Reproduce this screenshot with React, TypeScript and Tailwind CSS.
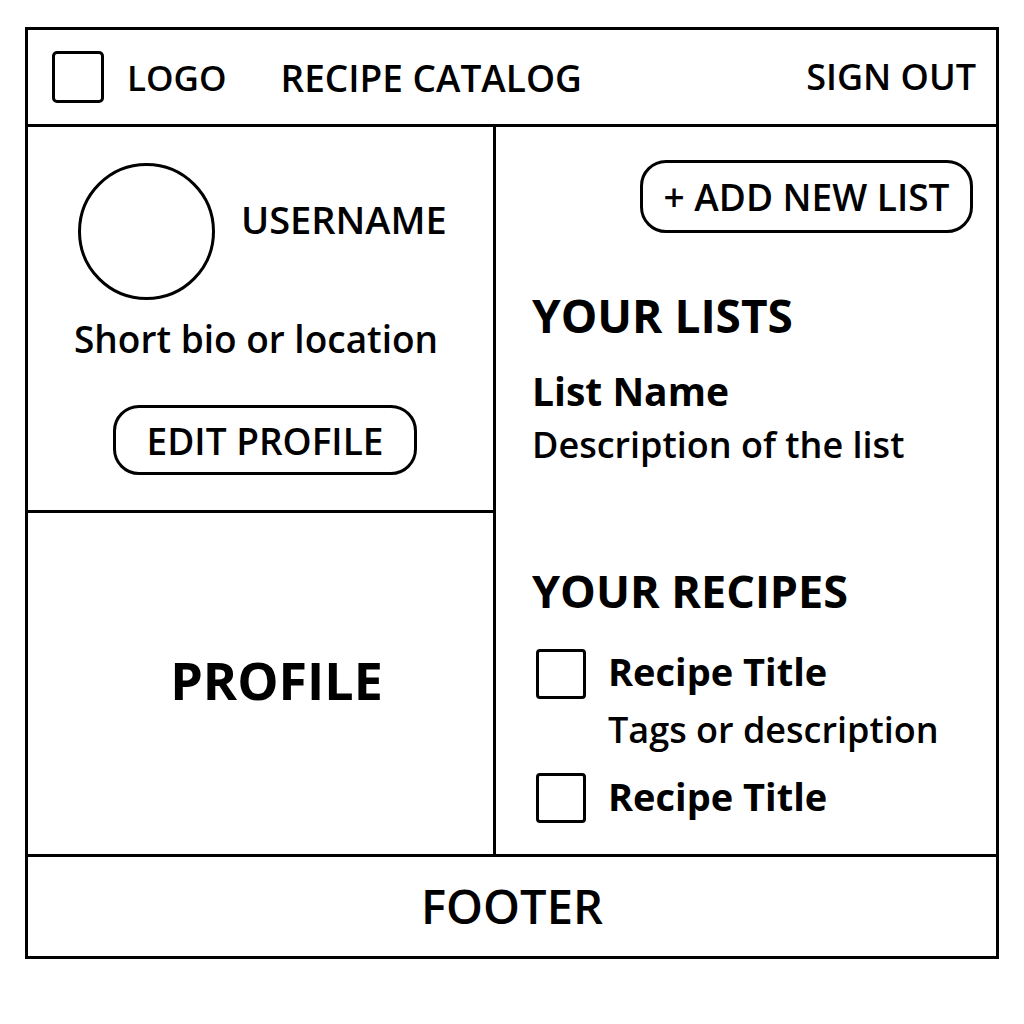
export default function App(): JSX.Element {
  return (
    <div className="min-h-[1024px] w-[1024px] bg-white pt-[27px] pl-[25px] text-black" style={{ fontFamily: '"Open Sans", "Noto Sans", sans-serif' }}>
      <div className="w-[974px] border-[3px] border-black">
        {/* Header */}
        <header className="flex h-[97px] items-center border-b-[3px] border-black pl-[24px] pr-[20px] font-semibold">
          <div className="size-[52px] rounded-[5px] border-[3px] border-black" />
          <span className="ml-[23px] text-[35px] leading-none">LOGO</span>
          <span className="ml-[54px] text-[37px] leading-none">RECIPE CATALOG</span>
          <span className="ml-auto text-[36px] leading-none">SIGN OUT</span>
        </header>

        <div className="flex h-[727px]">
          {/* Left column */}
          <div className="flex w-[468px] flex-col border-r-[3px] border-black">
            <section className="h-[386px] border-b-[3px] border-black pt-[36px]">
              <div className="flex items-start pl-[50px]">
                <div className="size-[137px] rounded-full border-[3px] border-black" />
                <span className="mt-[37px] ml-[26px] text-[38px] leading-none font-semibold">USERNAME</span>
              </div>
              <p className="mt-[20px] pl-[46px] text-[37px] leading-none font-semibold">Short bio or location</p>
              <button className="mt-[48px] ml-[85px] flex h-[70px] w-[304px] items-center justify-center rounded-[26px] border-[3px] border-black text-[37px] leading-none font-semibold">
                EDIT PROFILE
              </button>
            </section>
            <section className="flex flex-1 items-center justify-center pb-[8px] pl-[32px]">
              <h1 className="text-[52px] leading-none font-bold">PROFILE</h1>
            </section>
          </div>

          {/* Right column */}
          <div className="flex-1 pt-[33px] pl-[36px]">
            <div className="flex justify-end pr-[23px]">
              <button className="flex h-[73px] w-[333px] items-center justify-center rounded-[26px] border-[3px] border-black text-[37px] leading-none font-semibold">
                + ADD NEW LIST
              </button>
            </div>

            <h2 className="mt-[59px] text-[46px] leading-none font-bold">YOUR LISTS</h2>
            <p className="mt-[33px] text-[39px] leading-none font-bold">List Name</p>
            <p className="mt-[17px] text-[36px] leading-none font-semibold">Description of the list</p>

            <h2 className="mt-[105px] text-[45px] leading-none font-bold">YOUR RECIPES</h2>
            <div className="mt-[36px] flex items-start">
              <div className="ml-[4px] size-[50px] shrink-0 rounded-[4px] border-[3px] border-black" />
              <div className="ml-[22px]">
                <p className="mt-[3px] text-[38px] leading-none font-bold">Recipe Title</p>
                <p className="mt-[22px] text-[36px] leading-none font-semibold">Tags or description</p>
              </div>
            </div>
            <div className="mt-[25px] flex items-start">
              <div className="ml-[4px] size-[50px] shrink-0 rounded-[4px] border-[3px] border-black" />
              <p className="mt-[4px] ml-[22px] text-[38px] leading-none font-bold">Recipe Title</p>
            </div>
          </div>
        </div>

        {/* Footer */}
        <footer className="flex h-[102px] items-center justify-center border-t-[3px] border-black">
          <span className="text-[47px] leading-none font-semibold">FOOTER</span>
        </footer>
      </div>
    </div>
  );
}
